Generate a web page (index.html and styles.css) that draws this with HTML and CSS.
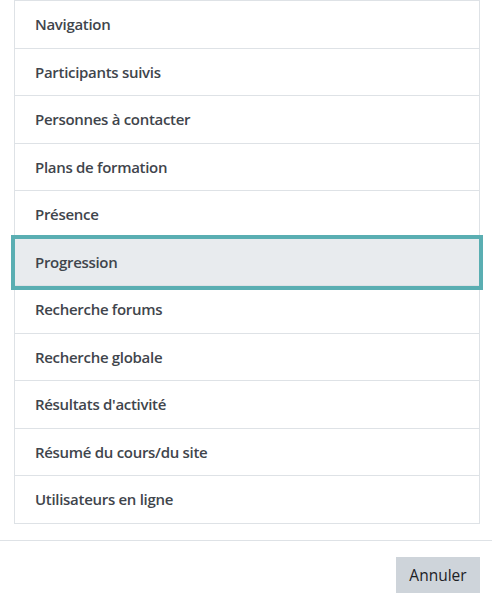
FILE: index.html
```html
<!DOCTYPE html>
<html lang="fr">
<head>
<meta charset="utf-8">
<title>Rapports</title>
<link rel="stylesheet" href="styles.css">
</head>
<body>
<div class="modal">
  <div class="modal-body">
    <ul class="list">
      <li class="item">Navigation</li>
      <li class="item">Participants suivis</li>
      <li class="item">Personnes à contacter</li>
      <li class="item">Plans de formation</li>
      <li class="item">Présence</li>
      <li class="item item-focus">Progression</li>
      <li class="item">Recherche forums</li>
      <li class="item">Recherche globale</li>
      <li class="item">Résultats d'activité</li>
      <li class="item">Résumé du cours/du site</li>
      <li class="item">Utilisateurs en ligne</li>
    </ul>
  </div>
  <div class="modal-footer">
    <button class="btn">Annuler</button>
  </div>
</div>
</body>
</html>
```
FILE: styles.css
```css
html, body {
  margin: 0;
  padding: 0;
  background: #fff;
}
body {
  font-family: "Open Sans", "Noto Sans", sans-serif;
  font-size: 15px;
  color: #3f454c;
}
.modal {
  width: 492px;
}
.modal-body {
  padding: 0 12px 16px 14px;
}
.list {
  list-style: none;
  margin: 0;
  padding: 0;
  border: 1px solid #dee2e6;
  border-bottom-width: 0;
}
.item {
  padding: 12px 20px;
  line-height: 22.5px;
  font-weight: 600;
  letter-spacing: -0.3px;
  border-bottom: 1px solid #dee2e6;
  position: relative;
}
.item-focus {
  background: #e8ebee;
  box-shadow: 0 0 0 4px #5aaeb2;
  z-index: 1;
}
.modal-footer {
  border-top: 1px solid #dee2e6;
  padding: 16px 12px 11px 12px;
  display: flex;
  justify-content: flex-end;
}
.btn {
  font-family: "Open Sans", "Noto Sans", sans-serif;
  font-size: 15.5px;
  color: #1d2125;
  background: #ced4da;
  border: 0;
  border-radius: 0;
  width: 84px;
  height: 36px;
  padding: 0;
}
```
